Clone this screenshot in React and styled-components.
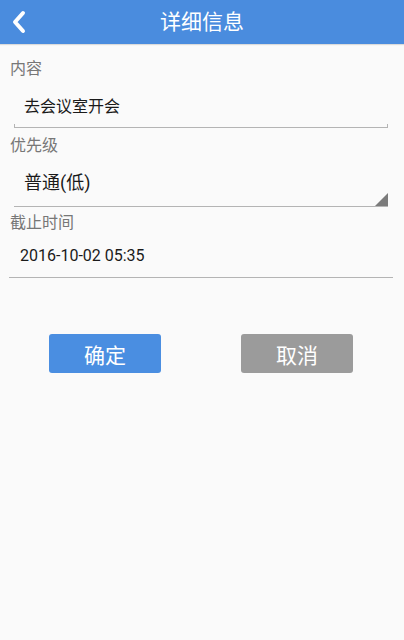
import React from "react";
import styled, { createGlobalStyle } from "styled-components";

const GlobalStyle = createGlobalStyle`
  html, body {
    margin: 0;
    padding: 0;
    background: #fafafa;
  }
  body {
    font-family: Roboto, "Noto Sans CJK SC", sans-serif;
  }
`;

const Page = styled.div`
  width: 404px;
  height: 640px;
  background: #fafafa;
  display: flex;
  flex-direction: column;
`;

const Header = styled.div`
  height: 44px;
  background: #4a8cde;
  display: flex;
  align-items: center;
  justify-content: center;
  position: relative;
  box-shadow: 0 1px 1px rgba(0, 0, 0, 0.12);
`;

const BackButton = styled.button`
  position: absolute;
  left: 8px;
  top: 9px;
  width: 22px;
  height: 26px;
  padding: 0;
  border: none;
  background: none;
  display: flex;
  align-items: center;
  justify-content: center;
`;

const Title = styled.div`
  color: #fff;
  font-size: 21px;
  line-height: 24px;
  font-family: Roboto, "Noto Sans CJK SC", sans-serif;
`;

const Form = styled.div`
  display: flex;
  flex-direction: column;
  padding: 0 11px 0 9px;
  margin-top: 15px;
`;

const Label = styled.div`
  height: 20px;
  line-height: 20px;
  font-size: 16px;
  color: #777;
  padding-left: 1px;
  margin-top: ${(p) => p.$gap || 0}px;
`;

const EditBox = styled.div`
  position: relative;
  margin: 0 5px;
  height: ${(p) => p.$h}px;
  padding-top: ${(p) => p.$pt || 0}px;
  box-sizing: border-box;
  border-bottom: 1px solid #b4b4b4;
  display: flex;
  align-items: center;
  padding-left: 10px;
  font-size: ${(p) => p.$size || 16}px;
  color: #1a1a1a;

  ${(p) =>
    p.$ticks &&
    `
    &::before, &::after {
      content: "";
      position: absolute;
      bottom: -1px;
      width: 1px;
      height: 4px;
      background: #b4b4b4;
    }
    &::before { left: 0; }
    &::after { right: 0; }
  `}
`;

const Corner = styled.div`
  position: absolute;
  right: 0;
  bottom: 0;
  width: 0;
  height: 0;
  border-left: 13px solid transparent;
  border-bottom: 13px solid #7b7b7b;
`;

const DateBox = styled.div`
  height: 45px;
  box-sizing: border-box;
  border-bottom: 1px solid #b4b4b4;
  display: flex;
  align-items: center;
  padding-left: 11px;
  font-size: 16px;
  color: #1a1a1a;
  font-family: Roboto, sans-serif;
`;

const ButtonRow = styled.div`
  display: flex;
  justify-content: space-between;
  padding: 0 51px 0 49px;
  margin-top: 56px;
`;

const ActionButton = styled.button`
  width: 112px;
  height: 39px;
  border: none;
  border-radius: 3px;
  background: ${(p) => (p.$primary ? "#4a8ee1" : "#9b9b9b")};
  color: #fff;
  font-size: 21px;
  font-family: Roboto, "Noto Sans CJK SC", sans-serif;
  padding: 0;
`;

export default function App() {
  return (
    <Page>
      <GlobalStyle />
      <Header>
        <BackButton>
          <svg width="16" height="24" viewBox="0 0 16 24">
            <path
              d="M12 3 L4 12 L12 21"
              fill="none"
              stroke="#fff"
              strokeWidth="4"
              strokeLinecap="round"
              strokeLinejoin="round"
            />
          </svg>
        </BackButton>
        <Title>详细信息</Title>
      </Header>
      <Form>
        <Label>内容</Label>
        <EditBox $h={49} $pt={4} $ticks>
          去会议室开会
        </EditBox>
        <Label $gap={8}>优先级</Label>
        <EditBox $h={51} $size={18}>
          普通(低)
          <Corner />
        </EditBox>
        <Label $gap={6}>截止时间</Label>
        <DateBox>2016-10-02 05:35</DateBox>
      </Form>
      <ButtonRow>
        <ActionButton $primary>确定</ActionButton>
        <ActionButton>取消</ActionButton>
      </ButtonRow>
    </Page>
  );
}
